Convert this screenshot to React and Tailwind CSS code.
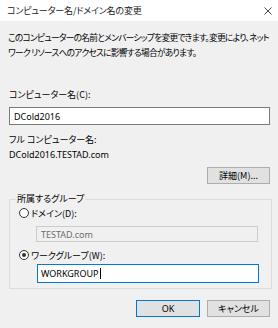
import React from 'react';

const jp = { fontFamily: '"Noto Sans CJK JP", "Noto Sans", sans-serif' };
const latin = { fontFamily: '"Noto Sans", sans-serif' };

function Radio({ checked }) {
  return (
    <span className="relative inline-block w-[10px] h-[10px] rounded-full border border-[#333] bg-white shrink-0">
      {checked && <span className="absolute left-[2px] top-[2px] w-[4px] h-[4px] rounded-full bg-[#333]" />}
    </span>
  );
}

export default function App() {
  return (
    <div className="w-[278px] h-[328px] bg-[#f0f0f0] text-[9px] text-[#000] leading-none [font-feature-settings:'palt'] overflow-hidden" style={jp}>
      {/* title bar */}
      <div className="h-[21px] bg-white flex items-center justify-between pl-[7px] pr-[5px]">
        <span className="text-[#222] tracking-[-0.15px]">コンピューター名/ドメイン名の変更</span>
        <svg width="8" height="8" viewBox="0 0 8 8" className="mr-[1px]">
          <path d="M0.5 0.5L7.5 7.5M7.5 0.5L0.5 7.5" stroke="#333" strokeWidth="0.9" fill="none" />
        </svg>
      </div>

      <div className="px-[8px] pt-[9px]">
        <p className="leading-[15px] text-[8.7px] tracking-[-0.7px] whitespace-nowrap">
          このコンピューターの名前とメンバーシップを変更できます。変更により、ネット<br />
          ワーク リソースへのアクセスに影響する場合があります。
        </p>

        <div className="mt-[30px] pl-[1px]">コンピューター名(C):</div>
        <div className="mt-[8px] ml-[1px] h-[18px] w-[261px] border border-[#7a7a7a] bg-white flex items-center pl-[4px]" style={latin}>
          DCold2016
        </div>

        <div className="mt-[10px] pl-[1px]">フル コンピューター名:</div>
        <div className="mt-[6px] pl-[1px]" style={latin}>DCold2016.TESTAD.com</div>

        <div className="flex justify-end mt-[8px]">
          <button className="w-[63px] h-[17px] border border-[#adadad] bg-[#e1e1e1] text-[9px] flex items-center justify-center">詳細(M)...</button>
        </div>

        <fieldset className="mt-[10px] ml-[1px] w-[261px] h-[95px] border border-[#dcdcdc] px-[12px] pb-0 pt-0 relative">
          <legend className="px-[1px] -ml-[6px] leading-[10px]">所属するグループ</legend>
          <div className="flex items-center gap-[2px] mt-[4px] -ml-[3px]">
            <Radio />
            <span>ドメイン(D):</span>
          </div>
          <div className="mt-[8px] ml-[14px] w-[222px] h-[16px] border border-[#cccccc] bg-[#f0f0f0] text-[#6d6d6d] flex items-center pl-[4px]" style={latin}>
            TESTAD.com
          </div>
          <div className="flex items-center gap-[2px] mt-[8px] -ml-[3px]">
            <Radio checked />
            <span>ワークグループ(W):</span>
          </div>
          <div className="mt-[4px] ml-[15px] w-[222px] h-[19px] border border-[#0078d7] bg-white flex items-center pl-[3px]" style={latin}>
            WORKGROUP<span className="inline-block w-[1px] h-[11px] bg-black ml-[1px]" />
          </div>
        </fieldset>

        <div className="flex justify-end gap-[7px] mt-[11px]">
          <button className="w-[64px] h-[17px] border border-[#0078d7] bg-[#e1e1e1] text-[9px] flex items-center justify-center" style={latin}>OK</button>
          <button className="w-[63px] h-[17px] border border-[#adadad] bg-[#e1e1e1] text-[9px] flex items-center justify-center">キャンセル</button>
        </div>
      </div>
    </div>
  );
}
